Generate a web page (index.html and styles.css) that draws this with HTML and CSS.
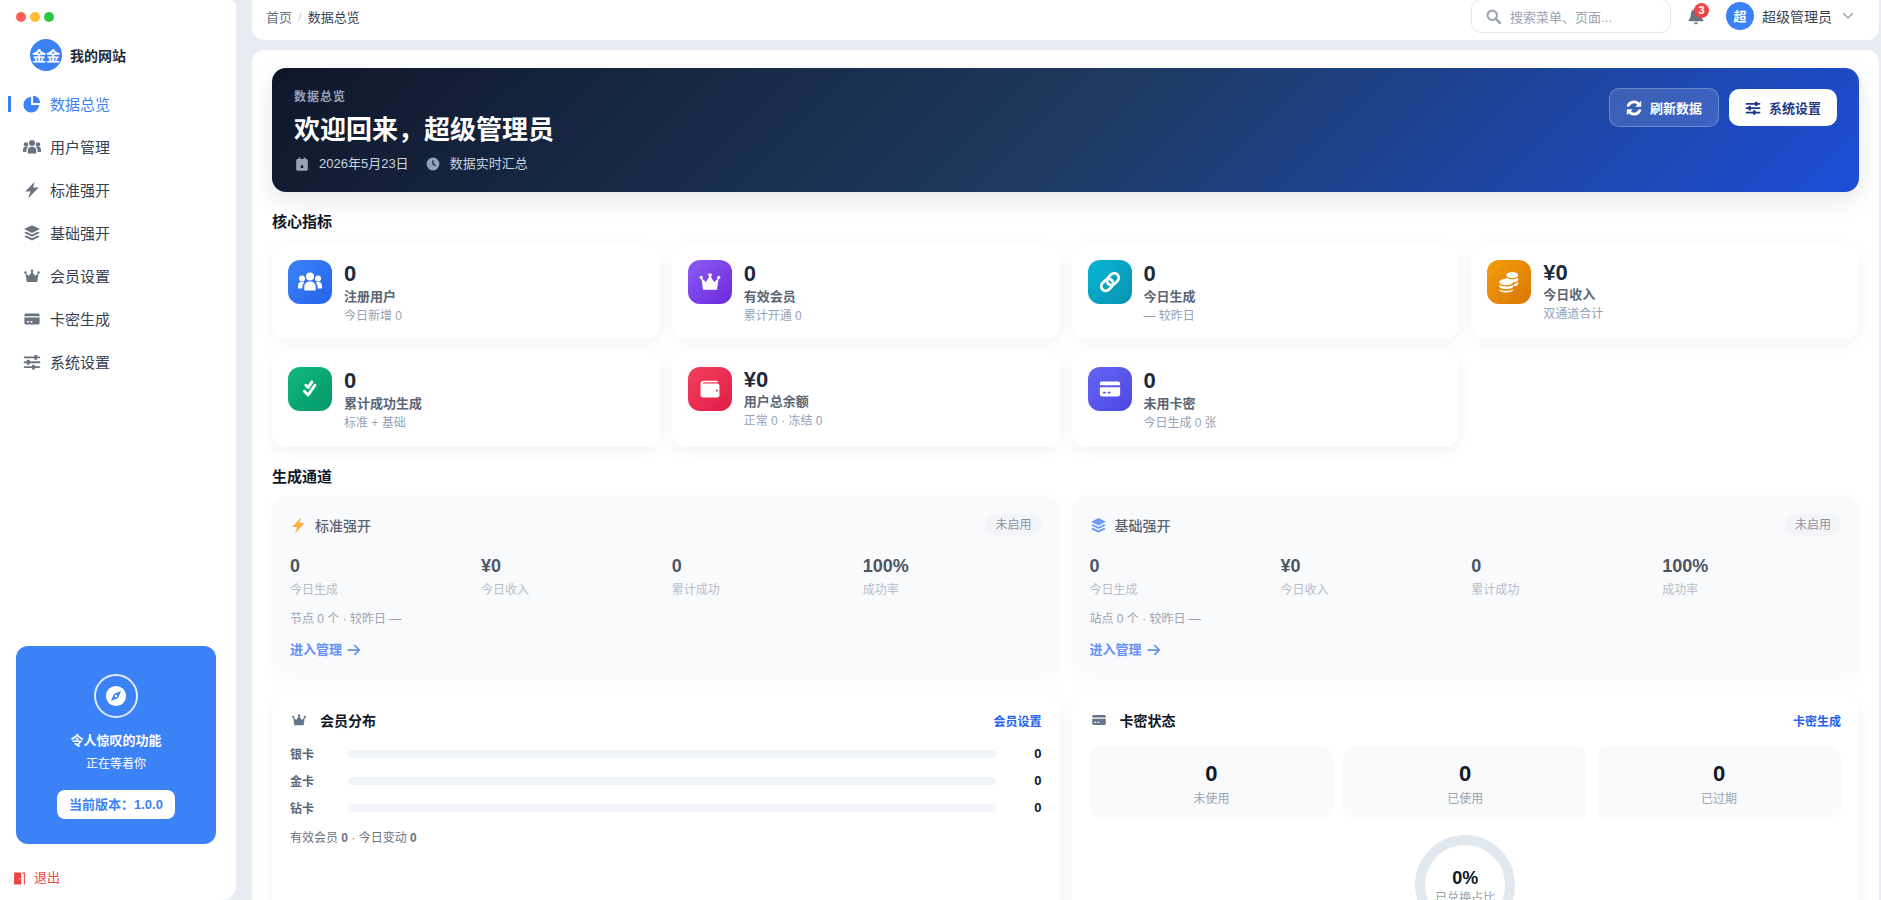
FILE: index.html
```html
<!DOCTYPE html>
<html lang="zh-CN">
<head>
	<meta charset="utf-8">
	<title>数据总览</title>
	<link rel="stylesheet" href="styles.css">
</head>
<body>
	<svg class="sprite" xmlns="http://www.w3.org/2000/svg">
		<symbol id="i-pie" viewBox="0 0 24 24"><path d="M10.800 2.600A10.400 10.400 0 1 0 21.400 13.400H10.800z"/><path d="M13.400 1a10 10 0 0 1 9.600 9.800h-9.600z"/></symbol>
		<symbol id="i-users" viewBox="0 0 24 24"><circle cx="12" cy="6.500" r="4"/><circle cx="4" cy="8.500" r="3"/><circle cx="20" cy="8.500" r="3"/><path d="M6.300 20.500v-3.800c0-3 2.400-5.200 5.700-5.200s5.700 2.200 5.700 5.200v3.800z"/><path d="M0 18.500v-2.800c0-2.300 1.700-3.900 4-3.900 1 0 1.800.2 2.400.7-1.200 1-2 2.600-2 4.500v1.500z"/><path d="M24 18.500v-2.800c0-2.300-1.700-3.900-4-3.900-1 0-1.800.2-2.400.7 1.200 1 2 2.600 2 4.500v1.500z"/></symbol>
		<symbol id="i-bolt" viewBox="0 0 24 24"><path d="M15.500 1 3 14h7L7 23 21 8.500h-7.500z"/></symbol>
		<symbol id="i-layers" viewBox="0 0 24 24"><path d="M12 1.500 1.500 6.800 12 12.100l10.500-5.300z"/><path d="M4.500 10.300 1.500 11.800 12 17.100l10.500-5.300-3-1.500-7.500 3.800z"/><path d="M4.500 15.300 1.500 16.800 12 22.100l10.500-5.300-3-1.500-7.500 3.800z"/></symbol>
		<symbol id="i-crown" viewBox="-1 -1 26 26"><circle cx="12" cy="4.500" r="2"/><circle cx="2.500" cy="7" r="1.800"/><circle cx="21.500" cy="7" r="1.800"/><path d="M2.500 7.500 7.500 12 12 5l4.500 7 5-4.500L19.500 20.500h-15z"/></symbol>
		<symbol id="i-card" viewBox="-1 -1 26 26"><path fill-rule="evenodd" d="M1 6.200C1 5 2 4 3.200 4h17.600C22 4 23 5 23 6.200V8H1zM1 10h22v7.800c0 1.200-1 2.200-2.200 2.200H3.200C2 20 1 19 1 17.800zM4.500 15v2h3v-2zM9.500 15v2h3v-2z"/></symbol>
		<symbol id="i-sliders" viewBox="0 0 24 24"><rect x="1" y="4.500" width="22" height="2.600" rx="1"/><rect x="1" y="11" width="22" height="2.600" rx="1"/><rect x="1" y="17.500" width="22" height="2.600" rx="1"/><rect x="15" y="2.500" width="4" height="6.600" rx="1.200"/><rect x="5" y="9" width="4" height="6.600" rx="1.200"/><rect x="12" y="15.500" width="4" height="6.600" rx="1.200"/></symbol>
		<symbol id="i-compass" viewBox="0 0 24 24"><path fill-rule="evenodd" d="M12 1a11 11 0 1 0 0 22 11 11 0 0 0 0-22zM17.500 6.500l-3.300 7.700-7.700 3.300 3.300-7.700zM12 10.600a1.400 1.400 0 1 0 0 2.800 1.400 1.400 0 0 0 0-2.800z"/></symbol>
		<symbol id="i-door" viewBox="0 0 24 24"><path fill-rule="evenodd" d="M2 1h13v22H2zM11 11v2.500h2V11z"/><path d="M17 1h5v22h-1.800V3H17z"/></symbol>
		<symbol id="i-search" viewBox="0 0 24 24"><circle cx="10" cy="10" r="7.500" fill="none" stroke="currentColor" stroke-width="3.400"/><path d="m15.500 15.500 6.500 6.500" fill="none" stroke="currentColor" stroke-width="4" stroke-linecap="round"/></symbol>
		<symbol id="i-bell" viewBox="0 0 24 24"><path d="M12 1c-1 0-1.700.7-1.700 1.600C6.800 3.400 5 6.300 5 9.500c0 4.500-1.300 6-2.700 7.600-.6.700-.2 1.900.9 1.900h17.600c1.100 0 1.500-1.200.9-1.900C20.300 15.500 19 14 19 9.500c0-3.200-1.800-6.100-5.300-6.900C13.700 1.700 13 1 12 1z"/><path d="M9.300 20.500h5.400c0 1.500-1.200 2.500-2.700 2.500s-2.700-1-2.700-2.500z"/></symbol>
		<symbol id="i-chevron" viewBox="0 0 24 24"><path d="m3 7 9 9 9-9" fill="none" stroke="currentColor" stroke-width="3" stroke-linecap="round" stroke-linejoin="round"/></symbol>
		<symbol id="i-sync" viewBox="2 2 20 20"><path d="M12 2.500c2.700 0 5 1.100 6.700 2.800L21 3v7.500h-7.500l2.600-2.600A6 6 0 0 0 6.300 10H2.700A9.500 9.500 0 0 1 12 2.500z"/><path d="M12 21.500c-2.700 0-5-1.100-6.700-2.800L3 21v-7.500h7.500l-2.600 2.600a6 6 0 0 0 9.800-2.100h3.600A9.500 9.500 0 0 1 12 21.500z"/></symbol>
		<symbol id="i-calendar" viewBox="0 0 24 24"><path fill-rule="evenodd" d="M6 1h3v2.500h6V1h3v2.500h1.500c1.400 0 2.500 1.100 2.500 2.500v15c0 1.400-1.100 2.500-2.500 2.500h-15C3.100 23.500 2 22.400 2 21V6c0-1.400 1.100-2.500 2.500-2.500H6zM10 14v5h4v-5z"/></symbol>
		<symbol id="i-clock" viewBox="0 0 24 24"><path fill-rule="evenodd" d="M12 1a11 11 0 1 0 0 22 11 11 0 0 0 0-22zM11 5.500h2v6l4 2.500-1 1.700-5-3z"/></symbol>
		<symbol id="i-link" viewBox="0 0 24 24"><g fill="none" stroke="currentColor" stroke-width="2.800" transform="rotate(-45 12 12)"><rect x="1.500" y="7.500" width="13" height="9" rx="4.500"/><rect x="9.500" y="7.500" width="13" height="9" rx="4.500"/></g></symbol>
		<symbol id="i-coins" viewBox="-1 -1 26 26"><ellipse cx="15.500" cy="4.500" rx="6.500" ry="3.200"/><path d="M9 7.500c1.200 1 3.500 1.600 6.500 1.600 2.700 0 5-.6 6.500-1.600v2c0 1.500-2.700 2.800-6 2.800-.6-1.400-3-3.300-7-3.500z"/><path d="M22 12v2c0 1.400-1.800 2.400-4.600 2.700v-2.900c2.100-.2 3.700-1 4.600-1.800z"/><ellipse cx="9" cy="12" rx="7.500" ry="3.600"/><path d="M1.500 15c1.500 1.200 4.200 2 7.500 2s6-.8 7.500-2v2c0 1.500-3.400 2.800-7.500 2.800S1.500 18.500 1.500 17z"/><path d="M1.500 20c1.500 1 4.200 1.600 7.500 1.600s6-.6 7.500-1.600v.7C16.500 22 13.100 23.500 9 23.500S1.500 22 1.500 20.700z"/></symbol>
		<symbol id="i-check2" viewBox="-4 -4 32 32"><g fill="none" stroke="currentColor" stroke-width="4" stroke-linecap="round" stroke-linejoin="round"><path d="m6.500 7 3 3 5-7.500"/><path d="m4.500 15 5 5 9-13"/></g></symbol>
		<symbol id="i-wallet" viewBox="-2 -2 28 28"><path fill-rule="evenodd" d="M4.500 2.500h15c1 0 1.800.7 1.800 1.700H4.500c-.9 0-.9 1.300 0 1.300h16.300c1.200 0 2.200 1 2.200 2.200v12c0 1.200-1 2.300-2.200 2.300H4c-1.700 0-3-1.300-3-3V5.800c0-1.800 1.500-3.300 3.500-3.300zM19 13v2h2v-2z"/></symbol>
		<symbol id="i-arrow" viewBox="0 0 24 24"><path d="M2 12h19M13.500 4.500 21 12l-7.500 7.500" fill="none" stroke="currentColor" stroke-width="3" stroke-linecap="round" stroke-linejoin="round"/></symbol>
	</svg>

	<aside class="sidebar">
		<div class="dots"><i class="dot dot-red"></i><i class="dot dot-yellow"></i><i class="dot dot-green"></i></div>
		<div class="brand">
			<span class="brand-logo">金金</span>
			<span class="brand-name">我的网站</span>
		</div>
		<nav class="nav">
			<a class="nav-item active"><svg class="nav-icon"><use href="#i-pie"/></svg>数据总览</a>
			<a class="nav-item"><svg class="nav-icon"><use href="#i-users"/></svg>用户管理</a>
			<a class="nav-item"><svg class="nav-icon"><use href="#i-bolt"/></svg>标准强开</a>
			<a class="nav-item"><svg class="nav-icon"><use href="#i-layers"/></svg>基础强开</a>
			<a class="nav-item"><svg class="nav-icon"><use href="#i-crown"/></svg>会员设置</a>
			<a class="nav-item"><svg class="nav-icon"><use href="#i-card"/></svg>卡密生成</a>
			<a class="nav-item"><svg class="nav-icon"><use href="#i-sliders"/></svg>系统设置</a>
		</nav>
		<div class="promo">
			<div class="promo-ring"><svg class="promo-icon"><use href="#i-compass"/></svg></div>
			<div class="promo-title">令人惊叹的功能</div>
			<div class="promo-sub">正在等着你</div>
			<div class="promo-version">当前版本：1.0.0</div>
		</div>
		<a class="logout"><svg class="logout-icon"><use href="#i-door"/></svg>退出</a>
	</aside>

	<div class="main">
		<header class="topbar">
			<div class="crumbs"><span>首页</span><span class="crumb-sep">/</span><span class="crumb-now">数据总览</span></div>
			<div class="top-tools">
				<div class="search"><svg class="search-icon"><use href="#i-search"/></svg>搜索菜单、页面...</div>
				<div class="bell"><svg class="bell-icon"><use href="#i-bell"/></svg><span class="bell-badge">3</span></div>
				<div class="user">
					<span class="user-avatar">超</span>
					<span>超级管理员</span>
					<svg class="user-chevron"><use href="#i-chevron"/></svg>
				</div>
			</div>
		</header>

		<main class="content">
			<section class="hero">
				<div>
					<div class="hero-kicker">数据总览</div>
					<h1 class="hero-title">欢迎回来，超级管理员</h1>
					<div class="hero-meta">
						<svg class="meta-icon"><use href="#i-calendar"/></svg><span>2026年5月23日</span>
						<svg class="meta-icon meta-gap"><use href="#i-clock"/></svg><span>数据实时汇总</span>
					</div>
				</div>
				<div class="hero-actions">
					<a class="btn btn-ghost"><svg class="btn-icon"><use href="#i-sync"/></svg>刷新数据</a>
					<a class="btn btn-white"><svg class="btn-icon"><use href="#i-sliders"/></svg>系统设置</a>
				</div>
			</section>

			<h2 class="section-title">核心指标</h2>
			<div class="stats">
				<div class="stat">
					<div class="stat-icon bg-blue"><svg><use href="#i-users"/></svg></div>
					<div><div class="stat-value">0</div><div class="stat-label">注册用户</div><div class="stat-sub">今日新增 0</div></div>
				</div>
				<div class="stat">
					<div class="stat-icon bg-purple"><svg><use href="#i-crown"/></svg></div>
					<div><div class="stat-value">0</div><div class="stat-label">有效会员</div><div class="stat-sub">累计开通 0</div></div>
				</div>
				<div class="stat">
					<div class="stat-icon bg-cyan"><svg><use href="#i-link"/></svg></div>
					<div><div class="stat-value">0</div><div class="stat-label">今日生成</div><div class="stat-sub">— 较昨日</div></div>
				</div>
				<div class="stat money">
					<div class="stat-icon bg-amber"><svg><use href="#i-coins"/></svg></div>
					<div><div class="stat-value">¥0</div><div class="stat-label">今日收入</div><div class="stat-sub">双通道合计</div></div>
				</div>
				<div class="stat">
					<div class="stat-icon bg-green"><svg><use href="#i-check2"/></svg></div>
					<div><div class="stat-value">0</div><div class="stat-label">累计成功生成</div><div class="stat-sub">标准 + 基础</div></div>
				</div>
				<div class="stat money">
					<div class="stat-icon bg-rose"><svg><use href="#i-wallet"/></svg></div>
					<div><div class="stat-value">¥0</div><div class="stat-label">用户总余额</div><div class="stat-sub">正常 0 · 冻结 0</div></div>
				</div>
				<div class="stat">
					<div class="stat-icon bg-indigo"><svg><use href="#i-card"/></svg></div>
					<div><div class="stat-value">0</div><div class="stat-label">未用卡密</div><div class="stat-sub">今日生成 0 张</div></div>
				</div>
			</div>

			<h2 class="section-title section-second">生成通道</h2>
			<div class="two-col">
				<div class="channel">
					<div class="channel-head">
						<svg class="channel-icon amber"><use href="#i-bolt"/></svg>
						<span class="channel-name">标准强开</span>
						<span class="badge">未启用</span>
					</div>
					<div class="channel-stats">
						<div><div class="ch-value">0</div><div class="ch-label">今日生成</div></div>
						<div><div class="ch-value">¥0</div><div class="ch-label">今日收入</div></div>
						<div><div class="ch-value">0</div><div class="ch-label">累计成功</div></div>
						<div><div class="ch-value">100%</div><div class="ch-label">成功率</div></div>
					</div>
					<div class="ch-note">节点 0 个 · 较昨日 —</div>
					<a class="ch-link">进入管理<svg class="ch-arrow"><use href="#i-arrow"/></svg></a>
				</div>
				<div class="channel">
					<div class="channel-head">
						<svg class="channel-icon blue"><use href="#i-layers"/></svg>
						<span class="channel-name">基础强开</span>
						<span class="badge">未启用</span>
					</div>
					<div class="channel-stats">
						<div><div class="ch-value">0</div><div class="ch-label">今日生成</div></div>
						<div><div class="ch-value">¥0</div><div class="ch-label">今日收入</div></div>
						<div><div class="ch-value">0</div><div class="ch-label">累计成功</div></div>
						<div><div class="ch-value">100%</div><div class="ch-label">成功率</div></div>
					</div>
					<div class="ch-note">站点 0 个 · 较昨日 —</div>
					<a class="ch-link">进入管理<svg class="ch-arrow"><use href="#i-arrow"/></svg></a>
				</div>
			</div>

			<div class="two-col panels">
				<div class="panel">
					<div class="panel-head">
						<svg class="panel-icon"><use href="#i-crown"/></svg>
						<span class="panel-title">会员分布</span>
						<a class="panel-link">会员设置</a>
					</div>
					<div class="bar-row"><span class="bar-label">银卡</span><div class="bar"></div><b class="bar-value">0</b></div>
					<div class="bar-row"><span class="bar-label">金卡</span><div class="bar"></div><b class="bar-value">0</b></div>
					<div class="bar-row"><span class="bar-label">钻卡</span><div class="bar"></div><b class="bar-value">0</b></div>
					<div class="panel-foot">有效会员 <b>0</b> · 今日变动 <b>0</b></div>
				</div>
				<div class="panel">
					<div class="panel-head">
						<svg class="panel-icon"><use href="#i-card"/></svg>
						<span class="panel-title">卡密状态</span>
						<a class="panel-link">卡密生成</a>
					</div>
					<div class="kami-grid">
						<div class="kami"><div class="kami-value">0</div><div class="kami-label">未使用</div></div>
						<div class="kami"><div class="kami-value">0</div><div class="kami-label">已使用</div></div>
						<div class="kami"><div class="kami-value">0</div><div class="kami-label">已过期</div></div>
					</div>
					<div class="ring">
						<div class="ring-value">0%</div>
						<div class="ring-label">已兑换占比</div>
					</div>
				</div>
			</div>
		</main>
	</div>
</body>
</html>
```

FILE: styles.css
```css
* {
	box-sizing: border-box;
}

html, body {
	margin: 0;
	height: 900px;
	overflow: hidden;
}

body {
	display: flex;
	background: #e8ebf1;
	color: #111827;
	font-family: "Liberation Sans", "Noto Sans CJK SC", sans-serif;
}

.sprite {
	position: absolute;
	width: 0;
	height: 0;
}

svg {
	fill: currentColor;
}

/* sidebar */
.sidebar {
	display: flex;
	flex-direction: column;
	flex: 0 0 236px;
	height: 900px;
	background: #fff;
	border-radius: 0 6px 14px 0;
}

.dots {
	display: flex;
	gap: 4px;
	padding: 12px 0 0 16px;
}

.dot {
	width: 10px;
	height: 10px;
	border-radius: 50%;
}

.dot-red { background: #ff5f57; }
.dot-yellow { background: #febc2e; }
.dot-green { background: #28c840; }

.brand {
	display: flex;
	align-items: center;
	gap: 8px;
	margin-top: 17px;
	padding-left: 30px;
}

.brand-logo {
	display: flex;
	align-items: center;
	justify-content: center;
	width: 32px;
	height: 32px;
	border-radius: 50%;
	background: #3b82f6;
	color: #fff;
	font-size: 14px;
	font-weight: 700;
}

.brand-name {
	font-size: 14px;
	font-weight: 700;
	color: #1f2937;
}

.nav {
	margin-top: 11px;
}

.nav-item {
	position: relative;
	display: flex;
	align-items: center;
	height: 43px;
	padding-left: 23px;
	font-size: 15px;
	color: #374151;
}

.nav-item.active {
	color: #3b82f6;
}

.nav-item.active::before {
	content: "";
	position: absolute;
	left: 8px;
	top: 14px;
	width: 3px;
	height: 16px;
	background: #3b82f6;
}

.nav-icon {
	width: 18px;
	height: 18px;
	margin-right: 9px;
	color: #6b7280;
}

.active .nav-icon {
	color: #3b82f6;
}

.promo {
	display: flex;
	flex-direction: column;
	align-items: center;
	margin: auto 20px 0 16px;
	height: 198px;
	padding-top: 28px;
	background: #3b82f6;
	border-radius: 12px;
	color: #fff;
}

.promo-ring {
	display: flex;
	align-items: center;
	justify-content: center;
	width: 44px;
	height: 44px;
	border: 2px solid rgba(255, 255, 255, .85);
	border-radius: 50%;
}

.promo-icon {
	width: 22px;
	height: 22px;
}

.promo-title {
	margin-top: 14px;
	font-size: 13px;
	line-height: 18px;
	font-weight: 700;
}

.promo-sub {
	margin-top: 5px;
	font-size: 12px;
	line-height: 18px;
}

.promo-version {
	margin-top: 17px;
	padding: 0 12px;
	height: 29px;
	line-height: 29px;
	background: #fff;
	border-radius: 8px;
	color: #3b82f6;
	font-size: 13px;
	font-weight: 700;
}

.logout {
	display: flex;
	align-items: center;
	gap: 8px;
	padding: 25px 0 13px 13px;
	font-size: 13px;
	line-height: 18px;
	color: #ef4444;
}

.logout-icon {
	width: 13px;
	height: 15px;
}

/* top bar */
.main {
	flex: 1;
	min-width: 0;
	height: 900px;
	margin: 0 2px 0 16px;
	overflow: hidden;
}

.topbar {
	display: flex;
	justify-content: space-between;
	height: 40px;
	padding: 0 25px 0 14px;
	background: #fff;
	border-radius: 0 0 12px 12px;
}

.crumbs {
	display: flex;
	align-items: center;
	gap: 6px;
	height: 33px;
	font-size: 13px;
	color: #6b7280;
}

.crumb-sep {
	color: #d1d5db;
}

.crumb-now {
	color: #374151;
}

.top-tools {
	display: flex;
	align-items: flex-start;
}

.search {
	display: flex;
	align-items: center;
	width: 200px;
	height: 34px;
	margin-top: -1px;
	padding-left: 14px;
	border: 1px solid #e5e7eb;
	border-radius: 10px;
	font-size: 13px;
	color: #9ca3af;
}

.search-icon {
	width: 15px;
	height: 15px;
	margin-right: 9px;
}

.bell {
	position: relative;
	width: 18px;
	height: 18px;
	margin: 7px 0 0 16px;
}

.bell-icon {
	width: 18px;
	height: 18px;
	color: #6b7280;
}

.bell-badge {
	position: absolute;
	left: 7px;
	top: -4px;
	width: 15px;
	height: 15px;
	line-height: 15px;
	border-radius: 50%;
	background: #ef4444;
	color: #fff;
	font-size: 11px;
	font-weight: 700;
	text-align: center;
}

.user {
	display: flex;
	align-items: center;
	height: 31px;
	margin-left: 21px;
	font-size: 14px;
	color: #374151;
}

.user-avatar {
	display: flex;
	align-items: center;
	justify-content: center;
	width: 28px;
	height: 28px;
	margin-right: 8px;
	border-radius: 50%;
	background: #3b82f6;
	color: #fff;
	font-size: 13px;
	font-weight: 700;
}

.user-chevron {
	width: 12px;
	height: 12px;
	margin-left: 10px;
	color: #9ca3af;
}

/* content */
.content {
	margin-top: 10px;
	height: 850px;
	padding: 18px 20px 0;
	background: #fff;
	border-radius: 12px 12px 0 0;
	overflow: hidden;
}

.hero {
	display: flex;
	justify-content: space-between;
	align-items: flex-start;
	height: 124px;
	padding: 20px 22px;
	border-radius: 14px;
	background: linear-gradient(135deg, #0f172a 0%, #1e3a5f 50%, #1d4ed8 100%);
	box-shadow: 0 8px 24px rgba(15, 23, 42, .1);
	color: #fff;
}

.hero-kicker {
	font-size: 12px;
	line-height: 18px;
	letter-spacing: 1px;
	font-weight: 600;
	color: #94a3b8;
}

.hero-title {
	margin: 6px 0 0;
	font-size: 26px;
	line-height: 36px;
	font-weight: 700;
}

.hero-meta {
	display: flex;
	align-items: center;
	margin-top: 6px;
	font-size: 13px;
	line-height: 20px;
	color: #cbd5e1;
}

.meta-icon {
	width: 14px;
	height: 14px;
	margin: 0 10px 0 1px;
	color: #94a3b8;
}

.meta-gap {
	margin-left: 17px;
}

.hero-actions {
	display: flex;
	align-items: center;
	gap: 10px;
}

.btn {
	display: flex;
	align-items: center;
	justify-content: center;
	border-radius: 10px;
	font-size: 13px;
	font-weight: 700;
}

.btn-ghost {
	width: 110px;
	height: 39px;
	border: 1px solid rgba(255, 255, 255, .25);
	background: rgba(255, 255, 255, .14);
}

.btn-white {
	width: 108px;
	height: 37px;
	background: #fff;
	color: #1e3a8a;
}

.btn-icon {
	width: 16px;
	height: 16px;
	margin-right: 8px;
}

.section-title {
	margin: 20px 0 12px;
	font-size: 15px;
	line-height: 20px;
	font-weight: 700;
	color: #111827;
}

.section-second {
	margin: 20px 0 9px;
}

/* stat cards */
.stats {
	display: grid;
	grid-template-columns: repeat(4, 1fr);
	grid-template-rows: 95px 96px;
	gap: 12px;
}

.stat {
	display: flex;
	gap: 12px;
	padding: 16px;
	background: #fff;
	border-radius: 14px;
	box-shadow: 0 4px 16px rgba(15, 23, 42, .05);
}

.stat-icon {
	display: flex;
	align-items: center;
	justify-content: center;
	flex: 0 0 44px;
	height: 44px;
	border-radius: 12px;
	color: #fff;
}

.stat-icon svg {
	width: 24px;
	height: 24px;
}

.bg-blue { background: linear-gradient(135deg, #3b82f6, #2563eb); }
.bg-purple { background: linear-gradient(135deg, #8b5cf6, #6d28d9); }
.bg-cyan { background: linear-gradient(135deg, #06b6d4, #0891b2); }
.bg-amber { background: linear-gradient(135deg, #f59e0b, #d97706); }
.bg-green { background: linear-gradient(135deg, #10b981, #059669); }
.bg-rose { background: linear-gradient(135deg, #f43f5e, #e11d48); }
.bg-indigo { background: linear-gradient(135deg, #6366f1, #4f46e5); }

.stat-value {
	font-size: 22px;
	line-height: 28px;
	font-weight: 700;
	color: #1e293b;
}

.stat-label {
	font-size: 13px;
	line-height: 18px;
	font-weight: 600;
	color: #5b6677;
}

.stat-sub {
	margin-top: 1px;
	font-size: 12px;
	line-height: 18px;
	color: #94a3b8;
}

.money .stat-value {
	line-height: 26px;
}

/* channels */
.two-col {
	display: grid;
	grid-template-columns: 1fr 1fr;
	gap: 12px;
}

.channel {
	height: 180px;
	padding: 18px;
	background: #f9fafc;
	border-radius: 16px;
	box-shadow: 0 4px 16px rgba(15, 23, 42, .03);
}

.channel-head {
	display: flex;
	align-items: center;
	height: 22px;
}

.channel-icon {
	flex: 0 0 17px;
	height: 17px;
	margin-right: 8px;
}

.amber { color: #fbb040; }
.blue { color: #6e9cf7; }

.channel-name {
	flex: 1;
	font-size: 14px;
	font-weight: 500;
	color: #5b6472;
}

.badge {
	padding: 0 10px;
	line-height: 22px;
	border-radius: 11px;
	background: #f3f5f8;
	font-size: 12px;
	color: #8a93a1;
}

.channel-stats {
	display: grid;
	grid-template-columns: repeat(4, 1fr);
	column-gap: 12px;
	margin-top: 18px;
}

.ch-value {
	font-size: 18px;
	line-height: 24px;
	font-weight: 700;
	color: #4d5563;
}

.ch-label {
	margin-top: 3px;
	font-size: 12px;
	line-height: 18px;
	color: #b7bdc8;
}

.ch-note {
	margin-top: 11px;
	font-size: 12px;
	line-height: 18px;
	color: #9ca3af;
}

.ch-link {
	display: flex;
	align-items: center;
	margin-top: 13px;
	font-size: 13px;
	line-height: 18px;
	font-weight: 600;
	color: #6590f5;
}

.ch-arrow {
	width: 14px;
	height: 14px;
	margin-left: 5px;
}

/* bottom panels */
.panels {
	margin-top: 19px;
}

.panel {
	height: 300px;
	padding: 15px 18px 0;
	background: #fff;
	border-radius: 16px;
	box-shadow: 0 4px 16px rgba(15, 23, 42, .05);
}

.panel-head {
	display: flex;
	align-items: center;
	height: 20px;
}

.panel-icon {
	width: 16px;
	height: 16px;
	margin: 0 13px 0 1px;
	color: #64748b;
}

.panel-title {
	flex: 1;
	font-size: 14px;
	font-weight: 700;
	color: #111827;
}

.panel-link {
	font-size: 12px;
	font-weight: 600;
	color: #2563eb;
}

.bar-row {
	display: flex;
	align-items: center;
	height: 18px;
	margin-top: 9px;
	font-size: 12px;
	color: #5b6677;
}

.panel-head + .bar-row {
	margin-top: 14px;
}

.bar-label {
	flex: 0 0 58px;
	font-weight: 600;
}

.bar {
	flex: 1;
	height: 8px;
	margin-top: 2px;
	border-radius: 4px;
	background: #f1f5f9;
}

.bar-value {
	flex: 0 0 46px;
	font-size: 13px;
	text-align: right;
	color: #111827;
}

.panel-foot {
	margin-top: 13px;
	font-size: 12px;
	line-height: 18px;
	color: #6b7280;
}

.kami-grid {
	display: grid;
	grid-template-columns: repeat(3, 1fr);
	gap: 10px;
	margin-top: 16px;
}

.kami {
	height: 73px;
	padding-top: 14px;
	border-radius: 12px;
	background: #f8fafc;
	text-align: center;
}

.kami-value {
	font-size: 22px;
	line-height: 28px;
	font-weight: 700;
	color: #0f172a;
}

.kami-label {
	margin-top: 2px;
	font-size: 12px;
	line-height: 18px;
	color: #9ca3af;
}

.ring {
	width: 100px;
	height: 100px;
	margin: 16px auto 0;
	padding-top: 22px;
	border: 10px solid #e2e8f0;
	border-radius: 50%;
	text-align: center;
}

.ring-value {
	font-size: 18px;
	line-height: 22px;
	font-weight: 700;
	color: #0f172a;
}

.ring-label {
	font-size: 12px;
	line-height: 18px;
	white-space: nowrap;
	color: #9ca3af;
}
```
